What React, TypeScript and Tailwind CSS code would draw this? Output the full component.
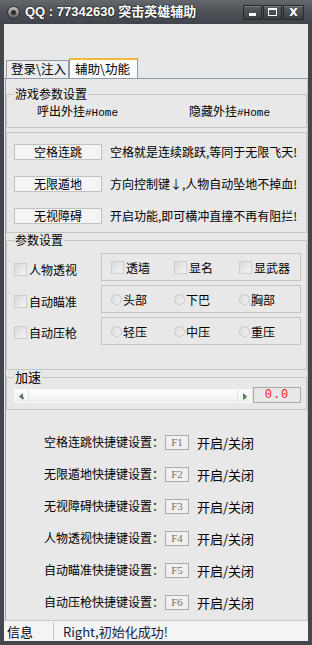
import React from 'react';

const cjk = "font-['Noto_Sans_CJK_SC',sans-serif]";

const Check = ({ label }: { label: string }) => (
  <div className="flex items-center gap-[2px]">
    <span className="w-[13px] h-[13px] border border-[#cdcdcd] bg-gradient-to-br from-[#d9d9d9] to-[#f3f3f3]" />
    <span className="leading-[13px]">{label}</span>
  </div>
);

const Radio = ({ label }: { label: string }) => (
  <div className="flex items-center gap-[1px]">
    <span className="w-[11px] h-[11px] rounded-full border border-[#c9c9c9] bg-gradient-to-br from-[#dadada] to-[#f3f3f3]" />
    <span className="leading-[13px]">{label}</span>
  </div>
);

const Inner = ({ children }: { children: React.ReactNode }) => (
  <div className="w-[200px] h-[28px] border border-[#c4c4c4] grid grid-cols-[63px_65px_1fr] items-center pl-[9px]">
    {children}
  </div>
);

const FuncBtn = ({ label, desc }: { label: string; desc: string }) => (
  <div className="flex items-center h-[16px]">
    <div className="ml-[7px] w-[88px] h-[16px] border border-[#c2c2c2] bg-[#f4f4f4] flex items-center justify-center leading-none">
      {label}
    </div>
    <span className="ml-[8px] leading-none whitespace-nowrap">{desc}</span>
  </div>
);

const hotkeys = [
  ['空格连跳', 'F1'],
  ['无限遁地', 'F2'],
  ['无视障碍', 'F3'],
  ['人物透视', 'F4'],
  ['自动瞄准', 'F5'],
  ['自动压枪', 'F6'],
];

const mono = "font-['Liberation_Mono',monospace] text-[11px]";

export default function App() {
  return (
    <div className={`w-[312px] h-[645px] bg-[#43464b] flex flex-col ${cjk} text-[12px] text-black`}>
      {/* title bar */}
      <div className="h-[24px] flex items-center bg-gradient-to-b from-[#64676c] via-[#4e5157] to-[#40434a]">
        <div className="ml-[7px] w-[13px] h-[13px] rounded-full bg-gradient-to-b from-[#c9c9c9] to-[#5c5c5c] border border-[#2e2e2e] flex items-center justify-center">
          <span className="w-[5px] h-[5px] rounded-full bg-[#2c2c2c]" />
        </div>
        <span className="ml-[5px] text-white font-bold text-[13px] font-['Liberation_Sans','Noto_Sans_CJK_SC',sans-serif] [text-shadow:0_0_2px_#000]">
          QQ : 77342630 突击英雄辅助
        </span>
        <div className="ml-auto mr-[8px] flex gap-[1px]">
          {[0, 1, 2].map((i) => (
            <div
              key={i}
              className={`${i === 2 ? 'w-[21px]' : 'w-[19px]'} h-[15px] border border-[#26282c] bg-gradient-to-b from-[#5a5d63] to-[#3b3e44] flex items-center justify-center text-white text-[11px] font-bold leading-none font-['DejaVu_Sans',sans-serif] shadow-[inset_0_1px_0_#7a7d83]`}
            >
              {i === 0 ? <span className="block w-[7px] h-[3px] bg-white mt-[5px]" /> : i === 1 ? <span className="block w-[9px] h-[8px] border-[1.5px] border-white border-t-[2px]" /> : 'X'}
            </div>
          ))}
        </div>
      </div>

      {/* client */}
      <div className="flex-1 mx-[4px] mb-[4px] bg-[#e8e8e8] flex flex-col">
        <div className="h-[34px]" />
        {/* tabs */}
        <div className="h-[20px] flex items-end pl-[2px]">
          <div className="w-[63px] h-[18px] border border-b-0 border-[#8d9ba8] bg-[#ececec] flex items-center pl-[4px] text-[12.5px] leading-none whitespace-nowrap">
            登录\注入
          </div>
          <div className="w-[69px] h-[20px] border border-b-0 border-[#8d9ba8] border-t-2 border-t-[#f3b73a] bg-[#fcfcfc] flex items-center pl-[5px] text-[12.5px] leading-none whitespace-nowrap">
            辅助\功能
          </div>
        </div>
        {/* panel */}
        <div className="flex-1 border-t border-[#8d9ba8] flex flex-col">
          <div className="flex-1 border-l border-[#9aa0a6] border-r border-r-[#c9c9c9] ml-[1px] flex flex-col pt-[9px]">
            {/* group 1 */}
            <fieldset className="border border-[#c4c4c4] h-[40px]">
              <legend className="ml-[7px] px-[1px] leading-[12px]">游戏参数设置</legend>
              <div className="grid grid-cols-[152px_1fr] mt-[5px] pl-[30px] leading-[12px] whitespace-nowrap">
                <span>呼出外挂<span className={mono}>#Home</span></span>
                <span>隐藏外挂<span className={mono}>#Home</span></span>
              </div>
            </fieldset>
            {/* group 2 */}
            <div className="mt-[4px] h-[101px] border border-[#c4c4c4] flex flex-col gap-[16px] pt-[11px]">
              <FuncBtn label="空格连跳" desc="空格就是连续跳跃,等同于无限飞天!" />
              <FuncBtn label="无限遁地" desc="方向控制键↓,人物自动坠地不掉血!" />
              <FuncBtn label="无视障碍" desc="开启功能,即可横冲直撞不再有阻拦!" />
            </div>
            {/* group 3 */}
            <fieldset className="mt-[1px] border border-[#c4c4c4] h-[136px]">
              <legend className="ml-[7px] px-[1px] leading-[12px]">参数设置</legend>
              <div className="flex flex-col gap-[4px] mt-[7px]">
                <div className="flex items-center">
                  <div className="w-[94px] pl-[7px] pt-[5px]"><Check label="人物透视" /></div>
                  <Inner>
                    <Check label="透墙" />
                    <Check label="显名" />
                    <Check label="显武器" />
                  </Inner>
                </div>
                <div className="flex items-center">
                  <div className="w-[94px] pl-[7px] pt-[5px]"><Check label="自动瞄准" /></div>
                  <Inner>
                    <Radio label="头部" />
                    <Radio label="下巴" />
                    <Radio label="胸部" />
                  </Inner>
                </div>
                <div className="flex items-center">
                  <div className="w-[94px] pl-[7px] pt-[3px]"><Check label="自动压枪" /></div>
                  <Inner>
                    <Radio label="轻压" />
                    <Radio label="中压" />
                    <Radio label="重压" />
                  </Inner>
                </div>
              </div>
            </fieldset>
            {/* group 4 */}
            <fieldset className="mt-[1px] border border-[#c4c4c4] h-[39px]">
              <legend className="ml-[7px] px-[1px] leading-[12px] text-[13px]">加速</legend>
              <div className="flex items-start mt-[4px] ml-[7px]">
                <div className="w-[238px] h-[14px] mt-[2px] flex bg-gradient-to-b from-[#fdfdfd] to-[#efefef] border border-[#f7f7f7]">
                  <div className="w-[14px] h-full border-r border-[#e2e2e2] flex items-center justify-center">
                    <svg width="5" height="7" viewBox="0 0 5 7"><path d="M4 0 L0 3.5 L4 7 Z" fill="#6b6b6b" /><rect x="3" y="4" width="2" height="2" fill="#3bb03b" /></svg>
                  </div>
                  <div className="flex-1" />
                  <div className="w-[14px] h-full border-l border-[#e2e2e2] flex items-center justify-center">
                    <svg width="5" height="7" viewBox="0 0 5 7"><path d="M1 0 L5 3.5 L1 7 Z" fill="#6b6b6b" /><rect x="2" y="4" width="2" height="2" fill="#3bb03b" /></svg>
                  </div>
                </div>
                <div className="ml-[1px] w-[48px] h-[16px] border border-[#a9a9a9] flex items-center justify-center text-[#ff1010] text-[12px] font-['Liberation_Mono',monospace] tracking-[1px] leading-none">
                  0.0
                </div>
              </div>
            </fieldset>
            {/* hotkeys */}
            <div className="flex-1 flex flex-col gap-[16px] pt-[24px]">
              {hotkeys.map(([n, k]) => (
                <div key={k} className="flex items-center h-[16px] pl-[38px]">
                  <span className="w-[121px] leading-none whitespace-nowrap">{n}快捷键设置：</span>
                  <span className="w-[24px] h-[15px] border border-[#ababab] bg-[#f0f0f0] text-[#707070] text-[11px] flex items-center justify-center leading-none font-['Liberation_Serif',serif]">
                    {k}
                  </span>
                  <span className="ml-[8px] leading-none text-[13px]">开启/关闭</span>
                </div>
              ))}
            </div>
          </div>
        </div>
        {/* status bar */}
        <div className="h-[21px] border-t border-[#c8c8c8] bg-[#f4f4f4] flex items-center text-[13px]">
          <span className="w-[49px] pl-[3px] leading-none">信息</span>
          <span className="w-[1px] h-[18px] bg-[#c8c8c8]" />
          <span className="ml-[9px] leading-none text-[#1c1c3c]">Right,初始化成功!</span>
        </div>
      </div>
    </div>
  );
}
